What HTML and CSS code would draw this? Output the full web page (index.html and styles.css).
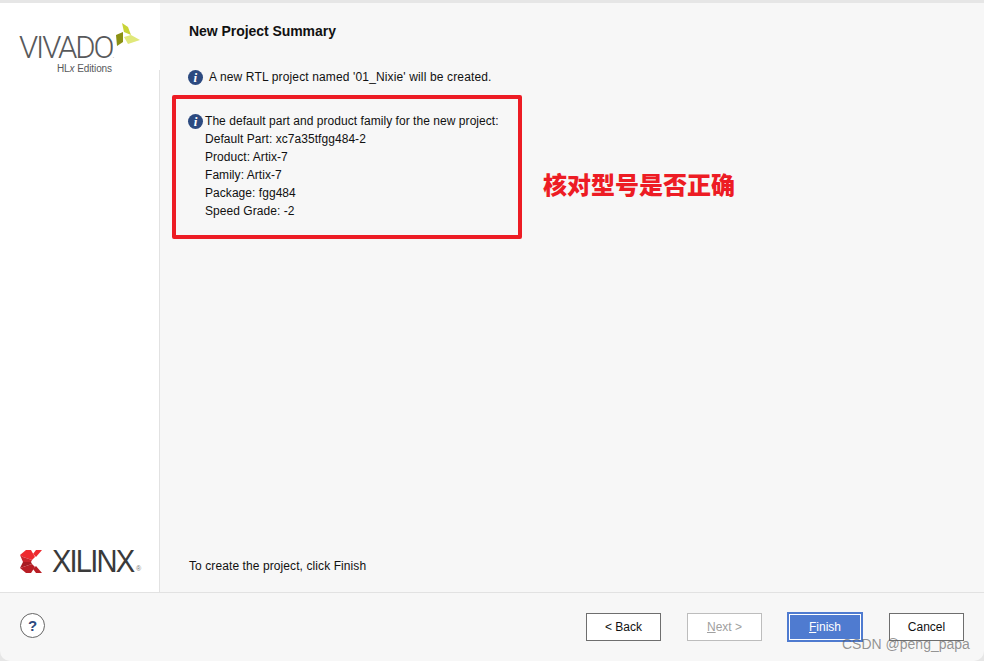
FILE: index.html
```html
<!DOCTYPE html>
<html lang="en">
<head>
    <meta charset="UTF-8">
    <meta name="viewport" content="width=device-width, initial-scale=1.0">
    <title>New Project Summary</title>
    <link rel="stylesheet" href="styles.css">
</head>
<body>
    <div class="window">
        <div class="main">
            <aside class="sidebar">
                <div class="vivado-logo">
                    <div class="vivado-name">VIVADO<span class="reg">.</span></div>
                    <div class="vivado-sub">HL<i>x</i> Editions</div>
                    <svg class="vivado-mark" width="24" height="23" viewBox="116 23 24 23">
                        <polygon points="122,23 128,27 131,35 124,32" fill="#c9d437"/>
                        <polygon points="124,37 131,35 140,40 128,44" fill="#e0e87a"/>
                        <polygon points="116,35 123,32 123,42 117,46" fill="#8b9113"/>
                    </svg>
                </div>
                <div class="xilinx-logo">
                    <svg width="22" height="23" viewBox="0 0 22 23">
                        <polygon points="0,5 6,0 11,0 15,7 12,10 3,7" fill="#ee2a2f"/>
                        <polygon points="13,4 16,0 22,0 16,7" fill="#ee2a2f"/>
                        <polygon points="0,5 3,7 12,10 11,12 3,12" fill="#c9252b"/>
                        <polygon points="3,12 11,12 12,14 0,18" fill="#a81c22"/>
                        <polygon points="0,18 12,14 15,17 11,23 6,23" fill="#b81e25"/>
                        <polygon points="13,19 16,16 22,23 16,23" fill="#b81e25"/>
                    </svg>
                    <span class="xilinx-name">XILINX</span><span class="xilinx-reg">®</span>
                </div>
            </aside>
            <section class="content">
                <h1 class="title">New Project Summary</h1>
                <div class="msg msg-first">
                    <span class="info">i</span>
                    <span>A new RTL project named '01_Nixie' will be created.</span>
                </div>
                <div class="msg msg-part">
                    <span class="info">i</span>
                    <div class="part-lines">
                        <div>The default part and product family for the new project:</div>
                        <div>Default Part: xc7a35tfgg484-2</div>
                        <div>Product: Artix-7</div>
                        <div>Family: Artix-7</div>
                        <div>Package: fgg484</div>
                        <div>Speed Grade: -2</div>
                    </div>
                </div>
                <p class="hint">To create the project, click Finish</p>
            </section>
        </div>
        <footer class="footer">
            <button class="help">?</button>
            <div class="buttons">
                <button class="btn">&lt; Back</button>
                <button class="btn btn-off"><u>N</u>ext &gt;</button>
                <button class="btn btn-main"><u>F</u>inish</button>
                <button class="btn">Cancel</button>
            </div>
        </footer>
    </div>

    <!-- annotation drawn on top of the screenshot -->
    <div class="red-box"></div>
    <div class="red-note">核对型号是否正确</div>
    <div class="watermark">CSDN @peng_papa</div>
</body>
</html>
```

FILE: styles.css
```css
html, body {
    margin: 0;
    padding: 0;
}

body {
    position: relative;
    width: 984px;
    height: 661px;
    overflow: hidden;
    background-color: #e6e6e6;
    font-family: "Liberation Sans", Arial, sans-serif;
    font-size: 12px;
    color: #111;
}

.window {
    display: flex;
    flex-direction: column;
    height: 658px;
    margin-top: 3px;
    background-color: #f7f7f7;
    border-radius: 0 0 10px 10px;
    overflow: hidden;
}

.main {
    display: flex;
    flex: 1;
}

.sidebar {
    display: flex;
    flex-direction: column;
    justify-content: space-between;
    width: 160px;
    background-color: #fff;
    position: relative;
}

.sidebar::after {
    content: "";
    position: absolute;
    top: 67px;
    bottom: 0;
    right: 0;
    width: 1px;
    background-color: #e2e2e2;
}

.vivado-logo {
    position: relative;
    padding: 31px 0 0 19px;
    color: #58595b;
}

.vivado-name {
    font-family: Roboto, "Liberation Sans", sans-serif;
    font-size: 31px;
    font-weight: 300;
    line-height: 28px;
    letter-spacing: -2.1px;
}

.reg {
    font-size: 8px;
    letter-spacing: 0;
}

.vivado-sub {
    margin: -6px 0 0 38px;
    font-size: 10px;
    line-height: 10px;
    letter-spacing: -0.1px;
}

.vivado-mark {
    position: absolute;
    left: 116px;
    top: 20px;
}

.xilinx-logo {
    display: flex;
    align-items: center;
    padding: 0 0 15px 20px;
    color: #3a3a3a;
}

.xilinx-name {
    width: 83px;
    margin-left: 10px;
    font-size: 32px;
    line-height: 32px;
    letter-spacing: -2px;
    transform: scaleX(0.91);
    transform-origin: left center;
}

.xilinx-reg {
    margin: 14px 0 0 1px;
    font-size: 7px;
    color: #777;
}

.content {
    display: flex;
    flex-direction: column;
    flex: 1;
    padding: 0 29px;
}

.title {
    margin: 20px 0 0 0;
    font-size: 14px;
    line-height: 16px;
    font-weight: bold;
    letter-spacing: -0.05px;
    color: #111;
}

.msg {
    display: flex;
    margin-left: -1px;
    line-height: 18px;
}

.msg-first {
    align-items: center;
    gap: 6px;
    margin-top: 29px;
    letter-spacing: 0.14px;
}

.msg-part {
    gap: 2px;
    margin-top: 26px;
    letter-spacing: 0.05px;
}

.info {
    flex: none;
    width: 15px;
    height: 15px;
    margin-top: 2px;
    border-radius: 50%;
    background-color: #2c4a80;
    color: #fff;
    font-family: "Liberation Serif", serif;
    font-size: 13px;
    font-style: italic;
    font-weight: bold;
    line-height: 15px;
    text-align: center;
}

.msg-first .info {
    margin-top: 0;
}

.hint {
    margin: auto 0 18px 0;
    line-height: 16px;
    letter-spacing: 0.09px;
}

.footer {
    display: flex;
    align-items: center;
    justify-content: space-between;
    flex: none;
    height: 69px;
    padding: 0 20px;
    border-top: 1px solid #e2e2e2;
    box-sizing: border-box;
}

.help {
    width: 25px;
    height: 25px;
    padding: 0;
    margin-bottom: 3px;
    border: 1px solid #666;
    border-radius: 50%;
    background-color: #fff;
    color: #2c4a80;
    font-family: "Liberation Sans", Arial, sans-serif;
    font-size: 15px;
    font-weight: bold;
}

.buttons {
    display: flex;
    align-items: center;
}

.btn {
    width: 75px;
    height: 28px;
    padding: 0;
    margin-left: 26px;
    border: 1px solid #6e6e6e;
    background-color: #fff;
    color: #111;
    font-family: "Liberation Sans", Arial, sans-serif;
    font-size: 12px;
}

.btn:first-child {
    margin-left: 0;
}

.btn-off {
    border-color: #bdbdbd;
    color: #a0a0a0;
}

.btn-main {
    width: 76px;
    height: 30px;
    margin-left: 25px;
    border: 2px solid #4f7bd0;
    outline: 1px solid #fff;
    outline-offset: -3px;
    background-color: #4f7bd0;
    color: #fff;
}

.red-box {
    position: absolute;
    left: 172px;
    top: 95px;
    width: 342px;
    height: 136px;
    border: 4px solid #ed1c24;
    border-radius: 2px;
}

.red-note {
    position: absolute;
    left: 543px;
    top: 170px;
    font-family: "Noto Sans CJK SC", sans-serif;
    font-size: 24px;
    font-weight: 900;
    line-height: 28px;
    color: #ed1c24;
}

.watermark {
    position: absolute;
    left: 842px;
    top: 636px;
    font-size: 14px;
    line-height: 16px;
    color: rgba(90, 90, 90, 0.65);
}
```
